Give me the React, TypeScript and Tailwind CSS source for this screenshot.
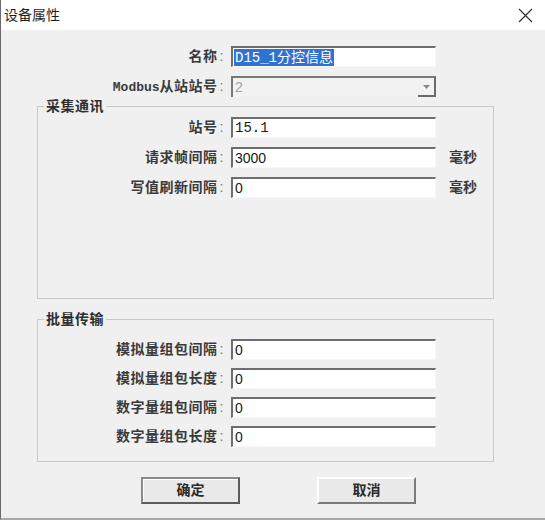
import React from "react";

const CJK = "font-['Liberation_Sans','Noto_Sans_CJK_SC',sans-serif]";
const MONO = "font-['Liberation_Mono','Noto_Sans_CJK_SC',monospace]";

const SUNKEN =
  "border-t-2 border-l-2 border-r border-b border-t-[#6e6e6e] border-l-[#6e6e6e] border-r-[#f7f7f7] border-b-[#f7f7f7]";

function Label({ width, children }: { width: string; children: React.ReactNode }) {
  return (
    <div className={`${width} shrink-0 text-right text-[14px] font-bold tracking-[0.5px] text-[#3a3a3a] ${CJK}`}>
      {children}
      <span className="ml-[2px] font-normal text-[#777]">:</span>
    </div>
  );
}

function TextBox({ value, mono }: { value: string; mono?: boolean }) {
  return (
    <div
      className={`ml-[7px] flex h-[21px] w-[205px] items-center bg-white pl-[2px] text-[14px] text-[#1a1a1a] ${SUNKEN} ${
        mono ? MONO : CJK
      }`}
    >
      {value}
    </div>
  );
}

function Row({
  labelWidth,
  label,
  value,
  unit,
  mono,
}: {
  labelWidth: string;
  label: React.ReactNode;
  value: string;
  unit?: string;
  mono?: boolean;
}) {
  return (
    <div className="flex h-[21px] items-center">
      <Label width={labelWidth}>{label}</Label>
      <TextBox value={value} mono={mono} />
      {unit && (
        <span className={`ml-[13px] text-[14px] font-bold text-[#3a3a3a] ${CJK}`}>{unit}</span>
      )}
    </div>
  );
}

function GroupBox({
  title,
  className,
  children,
}: {
  title: string;
  className: string;
  children: React.ReactNode;
}) {
  return (
    <fieldset className={`ml-[36px] w-[457px] border border-[#c9c9c9] ${className}`}>
      <legend className={`ml-[6px] px-[2px] text-[14px] leading-[16px] font-bold tracking-[0.5px] text-[#2e2e2e] ${CJK}`}>
        {title}
      </legend>
      {children}
    </fieldset>
  );
}

function DialogButton({ label, primary }: { label: string; primary?: boolean }) {
  return (
    <button
      className={`flex h-[27px] w-[99px] items-center justify-center bg-[#e9e9e9] text-[14px] font-bold text-[#2a2a2a] ${CJK} ${
        primary
          ? "border-2 border-t-[#8a8a8a] border-l-[#8a8a8a] border-r-[#5c5c5c] border-b-[#5c5c5c] shadow-[inset_1px_1px_0_#ffffff]"
          : "border-2 border-t-[#fdfdfd] border-l-[#fdfdfd] border-r-[#7a7a7a] border-b-[#7a7a7a]"
      }`}
    >
      {label}
    </button>
  );
}

export default function App() {
  return (
    <div className="flex h-[520px] w-[545px] flex-col border-l border-b-2 border-l-[#6a6a6a] border-b-[#a8a8a8] bg-[#f0f0f0]">
      {/* title bar */}
      <div className="flex h-[30px] shrink-0 items-center justify-between bg-white pl-[3px] pr-[12px]">
        <span className={`text-[14px] text-[#1e1e1e] ${CJK}`}>设备属性</span>
        <svg width="15" height="15" viewBox="0 0 15 15" className="mt-[1px]">
          <path d="M1 1 L14 14 M14 1 L1 14" stroke="#333" strokeWidth="1.2" fill="none" />
        </svg>
      </div>

      <div className="mt-[16px] flex flex-col">
        <div className="flex h-[21px] items-center">
          <Label width="w-[223px]">名称</Label>
          <div className={`ml-[7px] flex h-[21px] w-[205px] items-center bg-white pl-[1px] ${SUNKEN}`}>
            <span className="bg-[#2f72d0] px-[1px] text-[14px] leading-[16px] text-white">
              <span className={MONO}>D15_1</span>
              <span className={CJK}>分控信息</span>
            </span>
          </div>
        </div>

        <div className="mt-[9px] flex h-[21px] items-center">
          <Label width="w-[223px]">
            <span className={`${MONO} text-[13px] tracking-normal`}>Modbus</span>从站站号
          </Label>
          <div
            className={`ml-[7px] flex h-[21px] w-[205px] items-center justify-between bg-[#f2f2f2] pl-[2px] text-[14px] text-[#a3a3a3] ${CJK} border-t-2 border-l-2 border-r-2 border-t-[#7a7a7a] border-l-[#7a7a7a] border-r-[#6a6a6a]`}
          >
            2
            <div className="flex h-full w-[16px] items-center justify-center border-b-2 border-b-[#6a6a6a]">
              <svg width="7" height="4" viewBox="0 0 7 4">
                <path d="M0 0 H7 L3.5 4 Z" fill="#8a8a8a" />
              </svg>
            </div>
          </div>
        </div>

        <GroupBox title="采集通讯" className="mt-[1px] h-[201px] pt-[3px]">
          <div className="flex flex-col gap-[9px]">
            <Row labelWidth="w-[186px]" label="站号" value="15.1" mono />
            <Row labelWidth="w-[186px]" label="请求帧间隔" value="3000" unit="毫秒" />
            <Row labelWidth="w-[186px]" label="写值刷新间隔" value="0" unit="毫秒" />
          </div>
        </GroupBox>

        <GroupBox title="批量传输" className="mt-[12px] h-[151px] pt-[12px]">
          <div className="flex flex-col gap-[8px]">
            <Row labelWidth="w-[186px]" label="模拟量组包间隔" value="0" />
            <Row labelWidth="w-[186px]" label="模拟量组包长度" value="0" />
            <Row labelWidth="w-[186px]" label="数字量组包间隔" value="0" />
            <Row labelWidth="w-[186px]" label="数字量组包长度" value="0" />
          </div>
        </GroupBox>

        <div className="ml-[140px] mt-[15px] flex gap-[77px]">
          <DialogButton label="确定" primary />
          <DialogButton label="取消" />
        </div>
      </div>
    </div>
  );
}
